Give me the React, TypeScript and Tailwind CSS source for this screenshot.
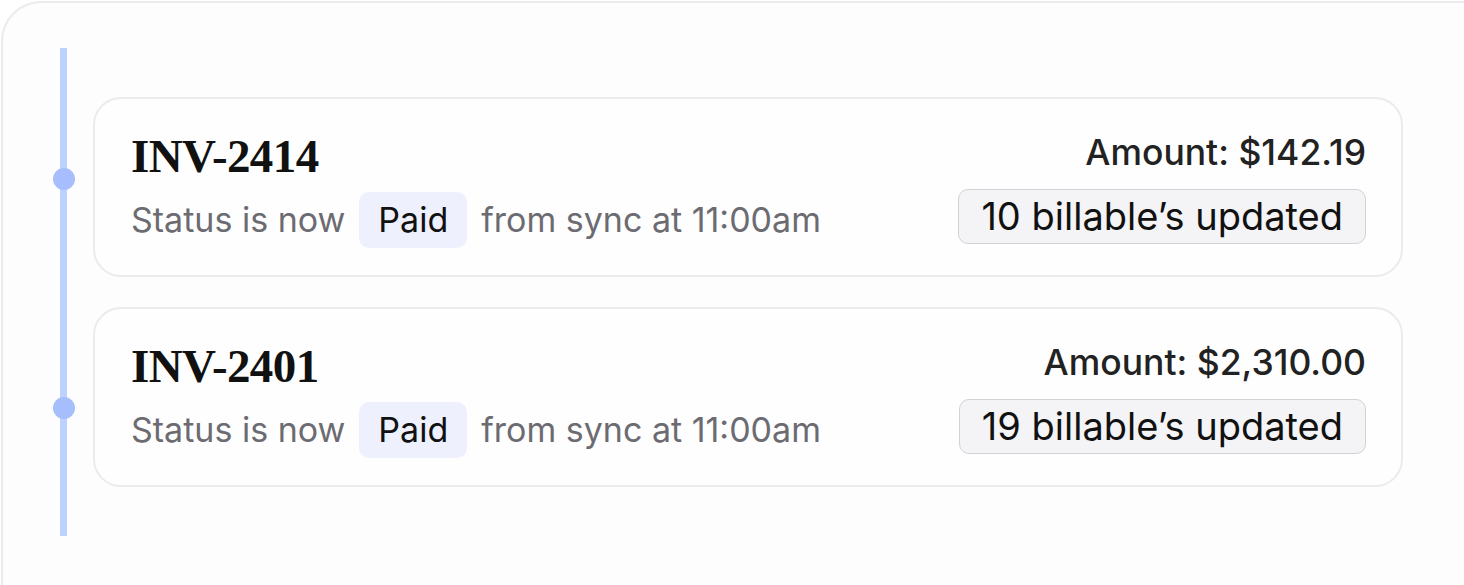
import React from 'react';

type Invoice = {
  id: string;
  amount: string;
  billables: number;
  syncedAt: string;
  dotTop: string;
};

const invoices: Invoice[] = [
  { id: 'INV-2414', amount: '$142.19', billables: 10, syncedAt: '11:00am', dotTop: 'top-[71px]' },
  { id: 'INV-2401', amount: '$2,310.00', billables: 19, syncedAt: '11:00am', dotTop: 'top-[90px]' },
];

const sans = "font-['Inter','Liberation_Sans',sans-serif]";

const InvoiceCard: React.FC<{ invoice: Invoice }> = ({ invoice }) => (
  <div className="relative">
    {/* timeline dot */}
    <div
      className={`absolute left-[-40px] ${invoice.dotTop} h-[22px] w-[22px] rounded-full bg-[#a6befd]`}
    />
    <div className="flex h-[180px] items-start justify-between rounded-[28px] border-2 border-[#ebebed] bg-[#fefefe] pl-[36px] pr-[35px] pt-[34px]">
      <div className="flex flex-col">
        <h2 className="font-['Liberation_Serif',serif] text-[47px] font-bold leading-none tracking-[-0.6px] text-[#111]">
          {invoice.id}
        </h2>
        <div className={`mt-[12px] flex items-center gap-[14px] ${sans} text-[34px] leading-none`}>
          <span className="text-[#6c6b71]">Status is now</span>
          <span className="flex h-[56px] items-center rounded-[10px] bg-[#eef0fd] px-[19px] text-[#111]">
            Paid
          </span>
          <span className="text-[#6c6b71]">from sync at {invoice.syncedAt}</span>
        </div>
      </div>
      <div className={`mt-[2px] flex flex-col items-end ${sans}`}>
        <div className="text-[35.5px] font-medium leading-none text-[#222]">
          Amount: {invoice.amount}
        </div>
        <div className="mt-[18px] flex h-[55px] items-center rounded-[10px] border border-[#d2d2d6] bg-[#f4f3f6] px-[22px] text-[38px] leading-none text-[#111]">
          {invoice.billables} billable’s updated
        </div>
      </div>
    </div>
  </div>
);

export default function App() {
  return (
    <div className="h-[585px] overflow-hidden bg-white">
      <div className="ml-px mt-px h-[640px] rounded-tl-[40px] border-l-2 border-t-2 border-[#ebebed] bg-[#fdfdfd] pl-[57px] pt-[45px]">
        <div className="relative flex flex-col gap-[30px] py-[49px] pl-[33px] pr-[61px]">
          {/* timeline line */}
          <div className="absolute bottom-0 left-0 top-0 w-[7px] bg-[#bdd1fe]" />
          {invoices.map((inv) => (
            <InvoiceCard key={inv.id} invoice={inv} />
          ))}
        </div>
      </div>
    </div>
  );
}
